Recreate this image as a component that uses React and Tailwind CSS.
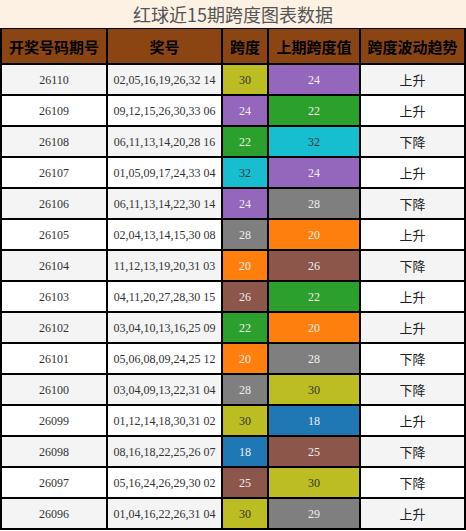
const C = {
  blue: 'bg-[#1f77b4] text-[#eeeeee]',
  orange: 'bg-[#ff7f0e] text-[#eeeeee]',
  green: 'bg-[#2ca02c] text-[#eeeeee]',
  purple: 'bg-[#9467bd] text-[#eeeeee]',
  brown: 'bg-[#8c564b] text-[#eeeeee]',
  gray: 'bg-[#7f7f7f] text-[#eeeeee]',
  olive: 'bg-[#bcbd22] text-[#333333]',
  cyan: 'bg-[#17becf] text-[#333333]',
};

const colorOf = (v) => {
  if (v === 18) return C.blue;
  if (v === 20) return C.orange;
  if (v === 22) return C.green;
  if (v === 24) return C.purple;
  if (v === 25 || v === 26) return C.brown;
  if (v === 28 || v === 29) return C.gray;
  if (v === 30) return C.olive;
  return C.cyan;
};

const rows = [
  ['26110', '02,05,16,19,26,32 14', 30, 24, '上升'],
  ['26109', '09,12,15,26,30,33 06', 24, 22, '上升'],
  ['26108', '06,11,13,14,20,28 16', 22, 32, '下降'],
  ['26107', '01,05,09,17,24,33 04', 32, 24, '上升'],
  ['26106', '06,11,13,14,22,30 14', 24, 28, '下降'],
  ['26105', '02,04,13,14,15,30 08', 28, 20, '上升'],
  ['26104', '11,12,13,19,20,31 03', 20, 26, '下降'],
  ['26103', '04,11,20,27,28,30 15', 26, 22, '上升'],
  ['26102', '03,04,10,13,16,25 09', 22, 20, '上升'],
  ['26101', '05,06,08,09,24,25 12', 20, 28, '下降'],
  ['26100', '03,04,09,13,22,31 04', 28, 30, '下降'],
  ['26099', '01,12,14,18,30,31 02', 30, 18, '上升'],
  ['26098', '08,16,18,22,25,26 07', 18, 25, '下降'],
  ['26097', '05,16,24,26,29,30 02', 25, 30, '下降'],
  ['26096', '01,04,16,22,26,31 04', 30, 29, '上升'],
];

const serif = "font-['Liberation_Serif','Noto_Sans_CJK_SC',serif]";
const sans = "font-['Noto_Sans_CJK_SC','Noto_Sans',sans-serif]";

export default function App() {
  return (
    <div className="w-[466px] h-[531px] bg-white">
      <div className={`h-[28px] bg-[#fdf1e4] flex items-center justify-center text-[18px] leading-none text-[#555555] ${sans}`}>
        红球近15期跨度图表数据
      </div>
      <div className="grid grid-cols-[104px_113px_44px_90px_103px] gap-[2px] bg-black p-[2px] pt-[1px] pb-[2px]">
        {['开奖号码期号', '奖号', '跨度', '上期跨度值', '跨度波动趋势'].map((h) => (
          <div
            key={h}
            className={`h-[34px] bg-[#8b4513] flex items-center justify-center text-[15px] font-bold text-black leading-none ${sans}`}
          >
            {h}
          </div>
        ))}
        {rows.map((r, i) => {
          const bg = i % 2 === 0 ? 'bg-[#f4f4f4]' : 'bg-white';
          return [
            <div key={r[0] + 'a'} className={`h-[29px] ${bg} flex items-center justify-center text-[12px] text-[#333333] ${serif}`}>
              {r[0]}
            </div>,
            <div key={r[0] + 'b'} className={`h-[29px] ${bg} flex items-center justify-center text-[12px] text-[#333333] ${serif}`}>
              {r[1]}
            </div>,
            <div key={r[0] + 'c'} className={`h-[29px] ${colorOf(r[2])} flex items-center justify-center text-[12px] ${serif}`}>
              {r[2]}
            </div>,
            <div key={r[0] + 'd'} className={`h-[29px] ${colorOf(r[3])} flex items-center justify-center text-[12px] ${serif}`}>
              {r[3]}
            </div>,
            <div key={r[0] + 'e'} className={`h-[29px] ${bg} flex items-center justify-center text-[13px] text-[#222222] ${sans}`}>
              {r[4]}
            </div>,
          ];
        })}
      </div>
    </div>
  );
}
